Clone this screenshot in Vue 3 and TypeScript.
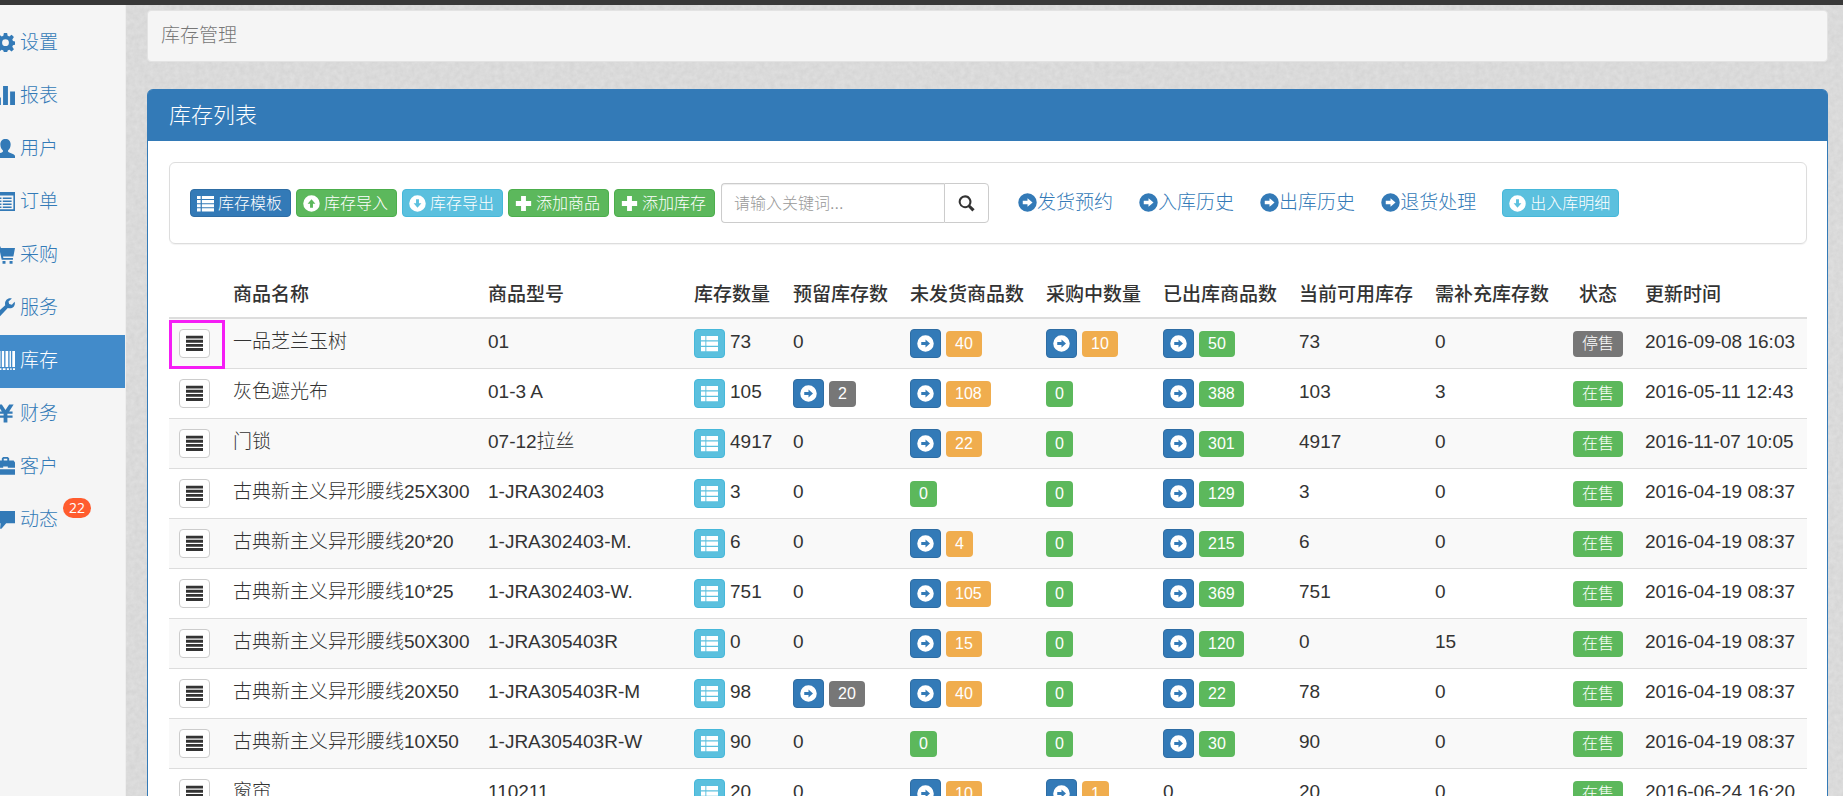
<script setup lang="ts">
import { ref, h, type FunctionalComponent } from 'vue'

type IconName =
  | 'cog' | 'stats' | 'user' | 'listAlt' | 'cart' | 'wrench' | 'barcode' | 'yen' | 'briefcase' | 'comment'
  | 'list' | 'up' | 'down' | 'right' | 'plus' | 'search' | 'justify' | 'thList'

const paths: Record<IconName, string> = {
  cog: 'M5.800 0h2.400l.4 2 1.200.5 1.700-1.200 1.700 1.700-1.200 1.700.5 1.200 1.500.3v2.400l-1.500.4-.5 1.200 1.200 1.700-1.700 1.700-1.700-1.200-1.200.5-.4 1.300H5.800l-.4-1.300-1.200-.5-1.700 1.200-1.700-1.700L2 10.200 1.500 9 0 8.600V6.200l1.500-.3L2 4.700.8 3l1.700-1.700 1.700 1.200L5.400 2zM7 4.600a2.500 2.500 0 1 0 0 5 2.500 2.500 0 0 0 0-5z',
  stats: 'M0 8.500h3.600v5.500H0zM5.200 0h3.600v14H5.200zM10.400 4H14V14h-3.600z',
  user: 'M7 0c2.300 0 3.800 1.500 3.800 4 0 1.800-.8 3.400-1.800 4.300-.3.500-.2 1.100.4 1.400 1.500.7 3.900 1.300 4.600 2.600V14H0v-1.700c.7-1.300 3.100-1.900 4.600-2.600.6-.3.700-.9.4-1.400-1-.9-1.800-2.500-1.800-4.300C3.200 1.500 4.700 0 7 0z',
  listAlt: 'M0 0h14v14H0zM1.200 2.600v10.200h11.600V2.600zM2.500 4H4v1.200H2.500zM5 4h6.500v1.200H5zM2.500 6.200H4v1.200H2.500zM5 6.200h6.500v1.200H5zM2.500 8.400H4v1.200H2.500zM5 8.400h6.500v1.200H5zM2.500 10.600H4v1.200H2.500zM5 10.600h6.500v1.200H5z',
  cart: 'M0 .8h3l.6 1.400H14L12.800 8.500H5.200l.2 1H12.500v1.300H4.200L2.300 2.200H0zM4.800 11.700h2.200V13.800H4.800zM10 11.700h2.200V13.800H10z',
  wrench: 'M13.700 2.800c.8 2.300-.9 4.800-3.400 4.800-.6 0-1.100-.1-1.600-.3L2.900 13.500c-.5.500-1.300.5-1.800 0l-.6-.6c-.5-.5-.5-1.200 0-1.700l6.300-5.900C6.100 2.700 7.900.2 10.400.2c.4 0 .9.100 1.300.2L9.200 2.500l.5 2 2 .4z',
  barcode: 'M0 0h1v11.700H0zM2 0h1.300v11.700H2zM4.300 0h1.700v11.700H4.300zM7 0h2v11.700H7zM10 0h1v11.700h-1zM12 0h2v11.700h-2zM0 12.800h1V14H0zM2 12.800h2V14H2zM5 12.800h2V14H5zM8 12.800h1.500V14H8zM10.500 12.800h1V14h-1zM12.500 12.800H14V14h-1.500z',
  yen: 'M1 .3h3.300L7 4.500 9.700.3H13L9.700 5.500h2.500v1.700H8.400v1.300h3.800v1.700H8.400V13.700H5.600v-3.500H1.800V8.500h3.800V7.200H1.800V5.500h2.500z',
  briefcase: 'M4.300 2.500V1l1-1h3.400l1 1v1.500H13l1 1.500v4H8.700v-1H5.300v1H0V4l1-1.500zM5.700 2.500h2.600v-1.200H5.700zM0 9h14v4H0z',
  comment: 'M0 .8h14v9H7.500L4 13.800H3l.4-4H0z',
  list: 'M0 .8h3v2.500H0zM4 .8h10v2.500H4zM0 4.200h3v2.500H0zM4 4.200h10v2.500H4zM0 7.600h3v2.500H0zM4 7.600h10v2.500H4zM0 11h3v2.500H0zM4 11h10v2.500H4z',
  up: 'M7 .2a6.800 6.800 0 1 0 0 13.600A6.800 6.800 0 0 0 7 .2zM7 3.500l3.200 3.700H8.200v3.200H5.800V7.200H3.800z',
  down: 'M7 .2a6.800 6.800 0 1 0 0 13.600A6.800 6.800 0 0 0 7 .2zM7 10.500L3.800 6.800h2V3.600h2.400v3.200h2z',
  right: 'M7 .2a6.800 6.800 0 1 0 0 13.600A6.800 6.800 0 0 0 7 .2zM10.700 7L7 10.200v-2H3.500V5.800H7v-2z',
  plus: 'M5 .8h4V5h4.300v4H9v4.200H5V9H.7V5H5z',
  search: 'M5.800.2a5.300 5.300 0 1 0 2.700 9.900l3.300 3.500 1.900-1.800-3.500-3.400A5.300 5.300 0 0 0 5.800.2zM5.800 2a3.600 3.600 0 1 1 0 7.200 3.600 3.600 0 0 1 0-7.200z',
  justify: 'M0 .6h14v2.300H0zM0 4h14v2.300H0zM0 7.400h14v2.300H0zM0 10.800h14v2.300H0z',
  thList: 'M0 .8h3.600v3.600H0zM4.400.8H14v3.600H4.400zM0 5.300h3.600v3.600H0zM4.400 5.300H14v3.600H4.400zM0 9.800h3.600v3.600H0zM4.400 9.800H14v3.600H4.400z',
}

const Icon: FunctionalComponent<{ name: IconName }> = (props) =>
  h('svg', { viewBox: '0 0 14 14', class: 'icon', 'aria-hidden': 'true' }, [
    h('path', { d: paths[props.name], fill: 'currentColor', 'fill-rule': 'evenodd' }),
  ])
Icon.props = ['name']

const nav: { label: string; icon: IconName; active?: boolean; badge?: number }[] = [
  { label: '设置', icon: 'cog' },
  { label: '报表', icon: 'stats' },
  { label: '用户', icon: 'user' },
  { label: '订单', icon: 'listAlt' },
  { label: '采购', icon: 'cart' },
  { label: '服务', icon: 'wrench' },
  { label: '库存', icon: 'barcode', active: true },
  { label: '财务', icon: 'yen' },
  { label: '客户', icon: 'briefcase' },
  { label: '动态', icon: 'comment', badge: 22 },
]

const actions: { label: string; icon: IconName; kind: string }[] = [
  { label: '库存模板', icon: 'list', kind: 'primary' },
  { label: '库存导入', icon: 'up', kind: 'success' },
  { label: '库存导出', icon: 'down', kind: 'info' },
  { label: '添加商品', icon: 'plus', kind: 'success' },
  { label: '添加库存', icon: 'plus', kind: 'success' },
]

const links = ['发货预约', '入库历史', '出库历史', '退货处理']
const heads = ['商品名称', '商品型号', '库存数量', '预留库存数', '未发货商品数', '采购中数量', '已出库商品数', '当前可用库存', '需补充库存数', '状态', '更新时间']

interface Row {
  name: string
  model: string
  qty: number
  reserved: number
  unshipped: number
  buying: number
  out: number
  usable: number
  need: number
  onSale: boolean
  time: string
}
const row = (
  name: string, model: string, qty: number, reserved: number, unshipped: number, buying: number,
  out: number, usable: number, need: number, time: string, onSale = true,
): Row => ({ name, model, qty, reserved, unshipped, buying, out, usable, need, onSale, time })

const rows: Row[] = [
  row('一品芝兰玉树', '01', 73, 0, 40, 10, 50, 73, 0, '2016-09-08 16:03', false),
  row('灰色遮光布', '01-3 A', 105, 2, 108, 0, 388, 103, 3, '2016-05-11 12:43'),
  row('门锁', '07-12拉丝', 4917, 0, 22, 0, 301, 4917, 0, '2016-11-07 10:05'),
  row('古典新主义异形腰线25X300', '1-JRA302403', 3, 0, 0, 0, 129, 3, 0, '2016-04-19 08:37'),
  row('古典新主义异形腰线20*20', '1-JRA302403-M.', 6, 0, 4, 0, 215, 6, 0, '2016-04-19 08:37'),
  row('古典新主义异形腰线10*25', '1-JRA302403-W.', 751, 0, 105, 0, 369, 751, 0, '2016-04-19 08:37'),
  row('古典新主义异形腰线50X300', '1-JRA305403R', 0, 0, 15, 0, 120, 0, 15, '2016-04-19 08:37'),
  row('古典新主义异形腰线20X50', '1-JRA305403R-M', 98, 20, 40, 0, 22, 78, 0, '2016-04-19 08:37'),
  row('古典新主义异形腰线10X50', '1-JRA305403R-W', 90, 0, 0, 0, 30, 90, 0, '2016-04-19 08:37'),
  row('窗帘', '110211', 20, 0, 10, 1, 0, 20, 0, '2016-06-24 16:20'),
]

const keyword = ref('')
</script>

<template>
  <div class="page">
    <svg class="texture" aria-hidden="true">
      <filter id="grain" x="0" y="0" width="100%" height="100%" color-interpolation-filters="sRGB">
        <feTurbulence type="fractalNoise" baseFrequency="0.2" numOctaves="3" seed="4" />
        <feColorMatrix values="0.06 0 0 0 0.825  0.06 0 0 0 0.825  0.06 0 0 0 0.825  0 0 0 0 1" />
      </filter>
      <rect width="100%" height="100%" filter="url(#grain)" />
    </svg>
    <div class="topbar"></div>
    <div class="body">
      <nav class="sidebar">
        <ul>
          <li v-for="item in nav" :key="item.label">
            <a href="#" :class="{ active: item.active }">
              <Icon :name="item.icon" />
              <span>{{ item.label }}</span>
              <span v-if="item.badge" class="badge">{{ item.badge }}</span>
            </a>
          </li>
        </ul>
      </nav>
      <main>
        <div class="crumb">库存管理</div>
        <section class="panel">
          <h1>库存列表</h1>
          <div class="content">
            <form class="toolbar" @submit.prevent>
              <button v-for="a in actions" :key="a.label" type="button" class="btn" :class="a.kind">
                <Icon :name="a.icon" />{{ a.label }}
              </button>
              <div class="search">
                <input v-model="keyword" type="text" placeholder="请输入关键词..." aria-label="关键词" />
                <button type="submit" aria-label="搜索"><Icon name="search" /></button>
              </div>
              <a v-for="l in links" :key="l" href="#" class="link"><Icon name="right" />{{ l }}</a>
              <button type="button" class="btn info"><Icon name="down" />出入库明细</button>
            </form>
            <table>
              <colgroup>
                <col class="c-menu" /><col class="c-name" /><col class="c-model" /><col class="c-qty" />
                <col class="c-five" /><col class="c-six" /><col class="c-five" /><col class="c-six" />
                <col class="c-six" /><col class="c-six" /><col class="c-state" /><col class="c-time" />
              </colgroup>
              <thead>
                <tr>
                  <th></th>
                  <th v-for="t in heads" :key="t" scope="col" :class="{ state: t === '状态' }">{{ t }}</th>
                </tr>
              </thead>
              <tbody>
                <tr v-for="(r, i) in rows" :key="r.model">
                  <td :class="{ marked: i === 0 }">
                    <div class="cell">
                      <button type="button" class="sq plain" aria-label="菜单"><Icon name="justify" /></button>
                    </div>
                  </td>
                  <td>{{ r.name }}</td>
                  <td>{{ r.model }}</td>
                  <td>
                    <div class="cell">
                      <button type="button" class="sq info" aria-label="明细"><Icon name="thList" /></button>
                      <span>{{ r.qty }}</span>
                    </div>
                  </td>
                  <td>
                    <div v-if="r.reserved" class="cell">
                      <button type="button" class="sq primary" aria-label="查看"><Icon name="right" /></button>
                      <span class="tag gray">{{ r.reserved }}</span>
                    </div>
                    <template v-else>0</template>
                  </td>
                  <td v-for="(n, k) in [r.unshipped, r.buying]" :key="k">
                    <div class="cell">
                      <button v-if="n" type="button" class="sq primary" aria-label="查看"><Icon name="right" /></button>
                      <span class="tag" :class="n ? 'orange' : 'green'">{{ n }}</span>
                    </div>
                  </td>
                  <td>
                    <div v-if="r.out" class="cell">
                      <button type="button" class="sq primary" aria-label="查看"><Icon name="right" /></button>
                      <span class="tag green">{{ r.out }}</span>
                    </div>
                    <template v-else>0</template>
                  </td>
                  <td>{{ r.usable }}</td>
                  <td>{{ r.need }}</td>
                  <td>
                    <div class="cell middle">
                      <span class="tag" :class="r.onSale ? 'green' : 'gray'">{{ r.onSale ? '在售' : '停售' }}</span>
                    </div>
                  </td>
                  <td>{{ r.time }}</td>
                </tr>
              </tbody>
            </table>
          </div>
        </section>
      </main>
    </div>
  </div>
</template>

<style>
html, body { height: 100%; overflow: hidden; }
#app { height: 100%; }
</style>

<style scoped>
* { box-sizing: border-box; }
.page {
  position: relative;
  display: flex;
  flex-direction: column;
  height: 100%;
  overflow: hidden;
  background: #dadada;
  color: #333;
  font: 300 19px/27px "Liberation Sans", "Noto Sans CJK SC", sans-serif;
}
.texture { position: absolute; inset: 0; width: 100%; height: 100%; }
.topbar { position: relative; flex: none; height: 5px; background: #383838; }
.body { position: relative; flex: 1; display: flex; min-height: 0; }
a { color: #337ab7; text-decoration: none; }
button, input { font: inherit; margin: 0; }
.icon { flex: none; width: 17px; height: 17px; display: block; }

.sidebar { flex: none; width: 126px; background: #f5f5f5; border-right: 1px solid #eee; overflow: hidden; }
.sidebar ul { list-style: none; margin: 12px 0 0 -4px; padding: 0; }
.sidebar a { display: flex; align-items: center; gap: 5px; height: 53px; padding-bottom: 2px; }
.sidebar .icon { width: 19px; height: 19px; }
.sidebar .active { background: #428bca; color: #fff; }
.badge {
  align-self: flex-start;
  margin-top: 4px;
  padding: 0 6px;
  border-radius: 10px;
  background: #ff5c2e;
  color: #fff;
  font: 14px/20px "Open Sans", sans-serif;
}

main { flex: 1; min-width: 0; padding: 5px 15px 0 21px; }
.crumb {
  height: 52px;
  padding: 11px 13px;
  border: 1px solid #e3e3e3;
  border-radius: 4px;
  background: #f5f5f5;
  color: #777;
}
.panel { margin-top: 27px; border: 1px solid #337ab7; border-radius: 6px 6px 0 0; background: #fff; }
.panel h1 {
  margin: 0;
  padding: 11px 21px;
  border-radius: 4px 4px 0 0;
  background: #337ab7;
  color: #fff;
  font-size: 22px;
  font-weight: 300;
  line-height: 29px;
}
.content { padding: 21px 20px 21px 21px; }

.toolbar {
  display: flex;
  align-items: center;
  gap: 5px;
  padding: 20px;
  margin-bottom: 26px;
  border: 1px solid #ddd;
  border-radius: 6px;
  box-shadow: 0 1px 1px rgba(0, 0, 0, 0.05);
  white-space: nowrap;
}
.btn {
  display: flex;
  align-items: center;
  gap: 4px;
  height: 28px;
  padding: 0 8px 0 6px;
  border: 1px solid;
  border-radius: 4px;
  color: #fff;
  font-size: 16px;
}
.primary { background: #337ab7; border-color: #2e6da4; }
.success { background: #5cb85c; border-color: #4cae4c; }
.info { background: #5bc0de; border-color: #46b8da; }
.search { display: flex; height: 40px; margin: 0 24px 0 1px; }
.search input {
  width: 223px;
  padding: 0 12px;
  border: 1px solid #ccc;
  border-right: 0;
  border-radius: 4px 0 0 4px;
  background: #fff;
  box-shadow: inset 0 1px 1px rgba(0, 0, 0, 0.075);
  font-size: 16px;
}
.search input::placeholder { color: #999; opacity: 1; }
.search button {
  display: grid;
  place-items: center;
  width: 45px;
  padding: 0;
  border: 1px solid #ccc;
  border-radius: 0 4px 4px 0;
  background: #fff;
  color: #333;
}
.link { display: flex; align-items: center; margin-right: 21px; padding-bottom: 2px; }
.link .icon { width: 19px; height: 19px; }

table { width: 100%; border-collapse: separate; border-spacing: 0; table-layout: fixed; white-space: nowrap; }
.c-menu { width: 54px; }
.c-model { width: 206px; }
.c-qty { width: 99px; }
.c-five { width: 117px; }
.c-six { width: 136px; }
.c-state { width: 74px; }
.c-time { width: 172px; }
th { padding: 11px 10px 9px; border-bottom: 2px solid #ddd; text-align: left; font-weight: 500; }
th.state { text-align: center; }
td { height: 50px; padding: 9px 10px; border-bottom: 1px solid #ddd; vertical-align: top; }
tbody tr:nth-child(odd) { background: #f9f9f9; }
.cell { display: flex; gap: 5px; }
.middle { justify-content: center; }
.sq {
  display: grid;
  place-items: center;
  width: 31px;
  height: 29px;
  margin-top: 1px;
  padding: 0;
  border: 1px solid;
  border-radius: 4px;
  color: #fff;
}
.primary.sq { border-color: #2e6da4; }
.info.sq { border-color: #46b8da; }
.plain.sq { background: #fff; border-color: #ccc; color: #333; }
.tag { height: 26px; margin-top: 3px; padding: 0 9px; border-radius: 4px; color: #fff; font-size: 16px; line-height: 26px; }
.gray { background: #777; }
.green { background: #5cb85c; }
.orange { background: #f0ad4e; }
.marked { position: relative; }
.marked::after { content: ""; position: absolute; inset: 1px -2px -1px 0; border: 3px solid #f51df5; pointer-events: none; }
</style>
